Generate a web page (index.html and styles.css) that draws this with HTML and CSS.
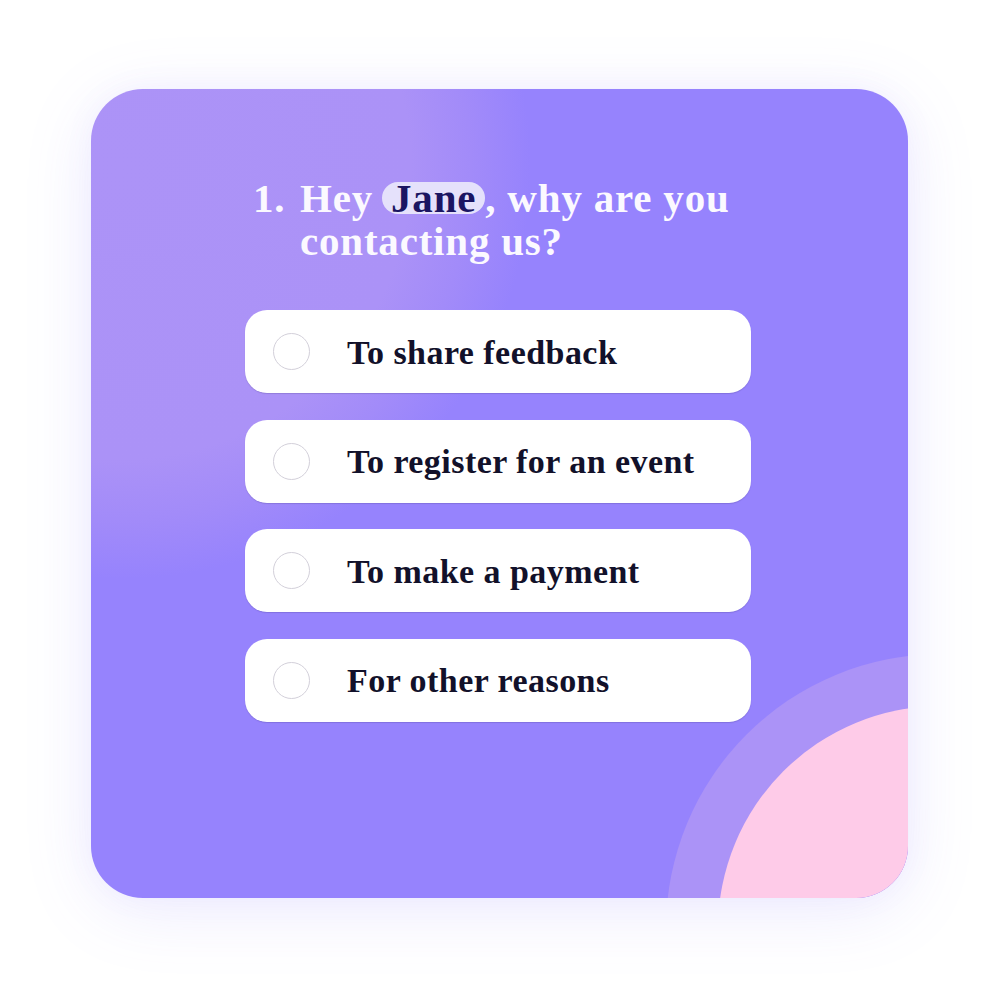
FILE: index.html
```html
<!DOCTYPE html>
<html lang="en">
<head>
<meta charset="utf-8">
<title>Contact survey</title>
<link rel="stylesheet" href="styles.css">
</head>
<body>
<div class="page">
  <section class="card">
    <div class="deco" aria-hidden="true">
      <div class="ring"></div>
      <div class="blob"></div>
    </div>
    <h1 class="question">
      <span class="num">1.</span>
      <span class="qtext">
        <span class="line"><span>Hey</span> <span class="name">Jane</span><span>, why are you</span></span>
        <span class="line">contacting us?</span>
      </span>
    </h1>
    <ul class="options">
      <li class="option"><span class="radio"></span><span class="label">To share feedback</span></li>
      <li class="option"><span class="radio"></span><span class="label">To register for an event</span></li>
      <li class="option"><span class="radio"></span><span class="label">To make a payment</span></li>
      <li class="option"><span class="radio"></span><span class="label">For other reasons</span></li>
    </ul>
  </section>
</div>
</body>
</html>
```

FILE: styles.css
```css
* { box-sizing: border-box; }

html, body {
  margin: 0;
  background: #ffffff;
}

.page {
  padding: 89px 0 0 91px;
  height: 996px;
}

.card {
  position: relative;
  width: 817px;
  height: 809px;
  border-radius: 52px;
  overflow: hidden;
  padding: 88px 0 0 154px;
  background:
    radial-gradient(circle 410px at 30px 80px, #ac93f7 0, #ab92f7 290px, #a28bf9 350px, rgba(150,131,253,0) 410px),
    #9683fd;
  box-shadow: 0 12px 70px rgba(130, 110, 250, 0.14), 0 0 30px rgba(140, 120, 250, 0.06);
}

.deco {
  position: absolute;
  left: 850px;
  top: 840px;
  width: 0;
  height: 0;
}

.ring, .blob {
  position: absolute;
  border-radius: 50%;
}

.ring {
  width: 550px;
  height: 550px;
  left: -275px;
  top: -275px;
  background: #ab93f7;
}

.blob {
  width: 446px;
  height: 446px;
  left: -223px;
  top: -223px;
  background: #fecbe8;
}

.question {
  position: relative;
  margin: 0 0 0 8px;
  display: flex;
  font-family: "Liberation Serif", "Times New Roman", serif;
  font-weight: 700;
  font-size: 41px;
  line-height: 43px;
  letter-spacing: 0.8px;
  color: #fbf9ff;
}

.num {
  flex: 0 0 47px;
}

.qtext {
  display: flex;
  flex-direction: column;
}

.line {
  display: block;
  white-space: nowrap;
}

.name {
  display: inline-block;
  padding: 0 9px;
  margin-left: -2px;
  line-height: 32px;
  border-radius: 16px;
  background: #e5e1fb;
  color: #1b1562;
}

.options {
  position: relative;
  list-style: none;
  margin: 47px 0 0 0;
  padding: 0;
  width: 506px;
  display: flex;
  flex-direction: column;
  gap: 26.5px;
}

.option {
  height: 83px;
  background: #ffffff;
  border-radius: 22px;
  display: flex;
  align-items: center;
  padding-left: 28px;
  box-shadow: 0 1px 1px rgba(60, 50, 120, 0.22);
}

.radio {
  flex: 0 0 37px;
  width: 37px;
  height: 37px;
  border-radius: 50%;
  border: 1.5px solid #d3d0da;
  margin-right: 37px;
}

.label {
  font-family: "Liberation Serif", "Times New Roman", serif;
  font-weight: 700;
  font-size: 34px;
  letter-spacing: 0.45px;
  color: #12112a;
  padding-top: 2px;
}
```
